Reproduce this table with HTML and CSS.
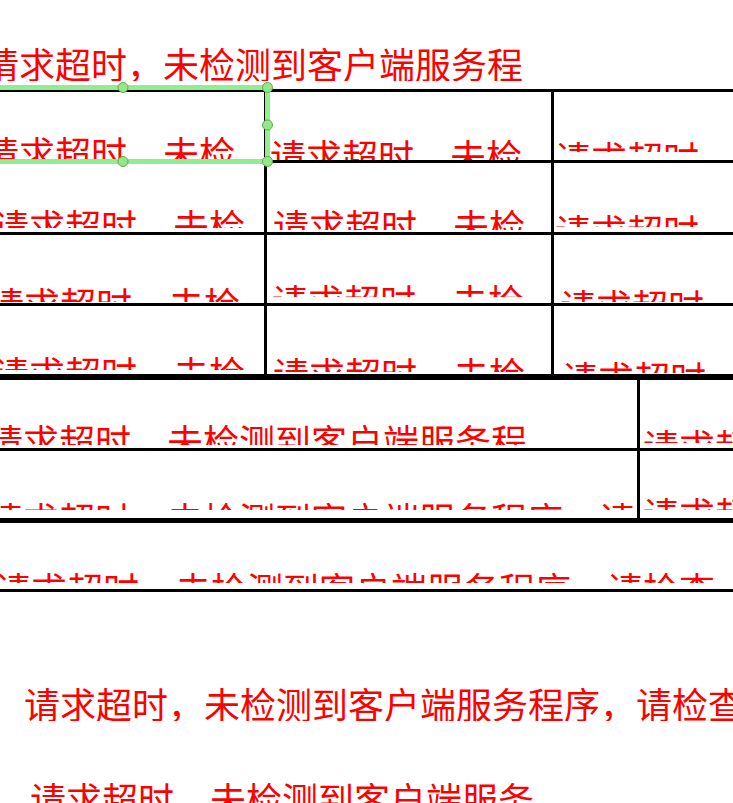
FILE: index.html
```html
<!DOCTYPE html>
<html lang="zh">
<head>
<meta charset="utf-8">
<title>Sheet</title>
<link rel="stylesheet" href="styles.css">
</head>
<body>
<div class="page">
  <div class="title">请求超时，未检测到客户端服务程序，请检查客户端是否启动</div>

  <div class="sheet t1">
    <div class="cell"><div class="clip k11">请求超时，未检测到客户端服务程序，请检查客户端是否启动</div></div>
    <div class="cell"><div class="clip k12">请求超时，未检测到客户端服务程序，请检查客户端是否启动</div></div>
    <div class="cell"><div class="clip k13">请求超时，未检测到客户端服务程序，请检查客户端是否启动</div></div>
    <div class="cell"><div class="clip k21">请求超时，未检测到客户端服务程序，请检查客户端是否启动</div></div>
    <div class="cell"><div class="clip k22">请求超时，未检测到客户端服务程序，请检查客户端是否启动</div></div>
    <div class="cell"><div class="clip k23">请求超时，未检测到客户端服务程序，请检查客户端是否启动</div></div>
    <div class="cell"><div class="clip k31">请求超时，未检测到客户端服务程序，请检查客户端是否启动</div></div>
    <div class="cell"><div class="clip k32">请求超时，未检测到客户端服务程序，请检查客户端是否启动</div></div>
    <div class="cell"><div class="clip k33">请求超时，未检测到客户端服务程序，请检查客户端是否启动</div></div>
    <div class="cell"><div class="clip k41">请求超时，未检测到客户端服务程序，请检查客户端是否启动</div></div>
    <div class="cell"><div class="clip k42">请求超时，未检测到客户端服务程序，请检查客户端是否启动</div></div>
    <div class="cell"><div class="clip k43">请求超时，未检测到客户端服务程序，请检查客户端是否启动</div></div>
  </div>

  <div class="sheet t2">
    <div class="cell"><div class="clip m11">请求超时，未检测到客户端服务程序，请检查客户端是否启动</div></div>
    <div class="cell"><div class="clip m12">请求超时，未检测到客户端服务程序，请检查客户端是否启动</div></div>
    <div class="cell"><div class="clip m21">请求超时，未检测到客户端服务程序，请检查客户端是否启动</div></div>
    <div class="cell"><div class="clip m22">请求超时，未检测到客户端服务程序，请检查客户端是否启动</div></div>
  </div>

  <div class="sheet t3">
    <div class="cell"><div class="clip n11">请求超时，未检测到客户端服务程序，请检查客户端是否启动</div></div>
  </div>

  <div class="note note-a">请求超时，未检测到客户端服务程序，请检查客户端是否启动</div>
  <div class="note note-b">请求超时，未检测到客户端服务程序，请检查客户端是否启动</div>

  <svg class="selection" width="300" height="175" viewBox="0 0 300 175" aria-hidden="true">
    <path d="M-10 87.5 H287.5 V161.5 H-10" fill="none" stroke="#90ee90" stroke-width="5"/>
    <g fill="#94e88c" stroke="#64a848" stroke-width="1">
      <circle cx="143" cy="87.5" r="5"/>
      <circle cx="287.5" cy="87.5" r="5"/>
      <circle cx="287.5" cy="125" r="5"/>
      <circle cx="143" cy="161.5" r="5"/>
      <circle cx="287.5" cy="161.5" r="5"/>
    </g>
  </svg>
</div>
</body>
</html>
```

FILE: styles.css
```css
* { box-sizing: border-box; }
html, body { margin: 0; padding: 0; }
body {
  width: 733px;
  height: 803px;
  overflow: hidden;
  background: #fff;
  color: #ff0000;
  font-family: "Noto Sans CJK SC", "Noto Sans", sans-serif;
  font-size: 36px;
}
.page {
  position: relative;
  width: 1000px;
  margin-left: -20px;
  padding-top: 45px;
}
.title {
  margin-left: 3px;
  width: 540px;
  height: 36px;
  line-height: 36px;
  white-space: nowrap;
  overflow: hidden;
}
.sheet { display: grid; }
.t1 {
  margin-top: 8px;
  border-top: 3px solid #000;
  grid-template-columns: 287px 287px 287px;
  grid-template-rows: 71px 72px 71px 71px;
}
.t2 {
  border-top: 3px solid #000;
  grid-template-columns: 660px 340px;
  grid-template-rows: 71px 70px;
}
.t3 {
  border-top: 2px solid #000;
  grid-template-columns: 1000px;
  grid-template-rows: 69px;
}
.cell {
  border-right: 3px solid #000;
  border-bottom: 3px solid #000;
  overflow: hidden;
}
.clip {
  overflow: hidden;
  white-space: nowrap;
  line-height: 36px;
  width: 252px;
}
.k11 { margin: 42px 0 0 3px; height: 26px; }
.k12 { margin: 45px 0 0 3px; height: 23px; }
.k13 { margin: 47px 0 0 1px; height: 13px; }
.k21 { margin: 44px 0 0 13px; height: 21px; }
.k22 { margin: 44px 0 0 6px; height: 23px; }
.k23 { margin: 49px 0 0 1px; height: 15px; }
.k31 { margin: 50px 0 0 8px; height: 17px; }
.k32 { margin: 47px 0 0 5px; height: 15px; }
.k33 { margin: 52px 0 0 6px; height: 15px; }
.k41 { margin: 48px 0 0 13px; height: 16px; }
.k42 { margin: 49px 0 0 6px; height: 17px; }
.k43 { margin: 53px 0 0 8px; height: 14px; }
.m11 { margin: 42px 0 0 7px; height: 23px; width: 540px; }
.m12 { margin: 47px 0 0 3px; height: 16px; width: 300px; }
.m21 { margin: 49px 0 0 7px; height: 10px; width: 650px; }
.m22 { margin: 44px 0 0 3px; height: 15px; width: 300px; }
.n11 { margin: 47px 0 0 15px; height: 13px; width: 720px; }
.note {
  white-space: nowrap;
  line-height: 36px;
  height: 36px;
  overflow: hidden;
}
.note-a { margin: 93px 0 0 44px; width: 760px; }
.note-b { margin: 59px 0 0 50px; width: 504px; }
.selection {
  position: absolute;
  left: 0;
  top: 0;
}
```
